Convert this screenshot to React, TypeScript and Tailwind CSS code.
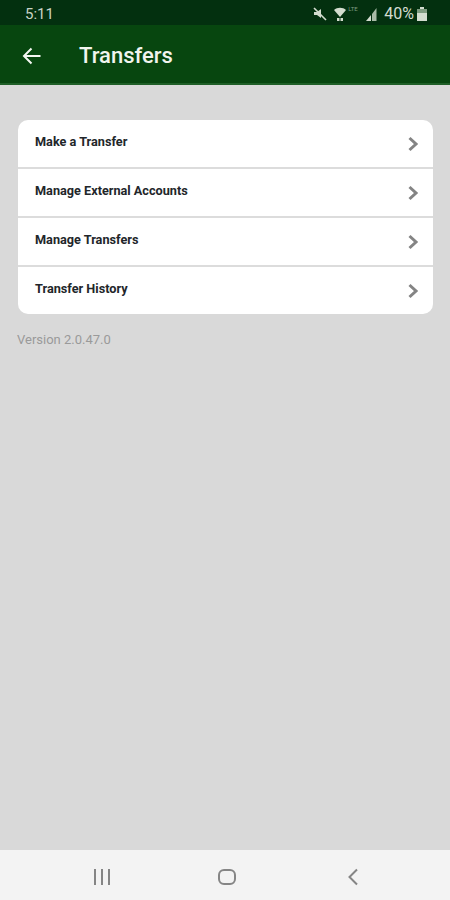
const rows = ["Make a Transfer", "Manage External Accounts", "Manage Transfers", "Transfer History"];

function Chevron() {
  return (
    <svg width="12" height="16" viewBox="0 0 12 16" fill="none" className="shrink-0">
      <path d="M2.5 2 L9 8 L2.5 14" stroke="#848484" strokeWidth="3" />
    </svg>
  );
}

function StatusIcons() {
  return (
    <div className="flex items-center text-[#d3dccf] pt-[3px]">
      {/* muted */}
      <svg width="14" height="14" viewBox="0 0 14 14" className="mr-[7px]">
        <path d="M1 5h3l4-3v9L4 8H1z" fill="#d3dccf" />
        <path d="M1 1l12 12" stroke="#d3dccf" strokeWidth="1.6" />
      </svg>
      {/* wifi */}
      <svg width="12" height="14" viewBox="0 0 12 14">
        <path d="M0 3c3-3 9-3 12 0L6 10z" fill="#d3dccf" />
        <path d="M3 11h2.500v3H3zM6.500 11H9v3H6.500z" fill="#d3dccf" />
      </svg>
      {/* lte */}
      <span className="w-[20px] pl-[2px] text-[6px] leading-none text-[#7f9b80] self-start font-['Roboto',sans-serif]">LTE</span>
      {/* signal */}
      <svg width="11" height="13" viewBox="0 0 11 13" className="mr-[7px]">
        <path d="M0 13 L5 7 V13z" fill="#d3dccf" />
        <path d="M6 6 L10.500 0 V13 H6z" fill="#a9bba8" />
      </svg>
      <span className="text-[16px] leading-none font-['Roboto',sans-serif]">40%</span>
      {/* battery */}
      <svg width="10" height="14" viewBox="0 0 10 14" className="ml-[3px]">
        <path d="M3 0h4v2H3z" fill="#d3dccf" />
        <path d="M0 2h10v4H0z" fill="#7f9b80" />
        <path d="M0 6h10v8H0z" fill="#d3dccf" />
      </svg>
    </div>
  );
}

export default function App() {
  return (
    <div className="flex flex-col w-[450px] h-[900px] bg-[#d9d9d9] font-['Roboto',sans-serif] overflow-hidden">
      {/* Status bar */}
      <div className="flex items-center justify-between h-[25px] pl-[25px] pr-[23px] bg-[#03300f]">
        <span className="pt-[3px] text-[15px] leading-none text-[#c9d4c6]">5:11</span>
        <StatusIcons />
      </div>

      {/* Header */}
      <div className="flex items-center h-[60px] pl-[22px] pt-[4px] bg-[#07460f] border-b-2 border-[#1f5f27]">
        <svg width="19" height="18" viewBox="0 0 19 18" fill="none">
          <path d="M18.500 9H2 M9.500 1.500 L2 9 L9.500 16.500" stroke="#f4f7f2" strokeWidth="2" />
        </svg>
        <h1 className="ml-[38px] text-[22px] font-medium leading-none text-[#f1f4ee]">Transfers</h1>
      </div>

      {/* List */}
      <div className="flex-1 pl-[18px] pr-[17px] pt-[35px]">
        <div className="rounded-[10px] bg-white overflow-hidden">
          {rows.map((row, i) => (
            <div
              key={row}
              className={`flex items-center justify-between pl-[17px] pr-[14px] ${i < rows.length - 1 ? "h-[49px] border-b-2 border-[#dcdcdc]" : "h-[47px]"}`}
            >
              <span className="text-[12.7px] font-bold leading-none text-[#22262a] -mt-[3px]">{row}</span>
              <Chevron />
            </div>
          ))}
        </div>
        <p className="mt-[19px] -ml-[1px] text-[13px] leading-none text-[#9a9a9a]">Version 2.0.47.0</p>
      </div>

      {/* Nav bar */}
      <div className="flex items-center h-[50px] pl-[93px] pt-[3px] bg-[#f3f3f3]">
        <svg width="18" height="16" viewBox="0 0 18 16" fill="none">
          <path d="M2 0v16M9 0v16M16 0v16" stroke="#858585" strokeWidth="2" />
        </svg>
        <svg width="18" height="16" viewBox="0 0 18 16" fill="none" className="ml-[107px]">
          <rect x="1" y="1" width="16" height="14" rx="5" stroke="#858585" strokeWidth="2" />
        </svg>
        <svg width="12" height="18" viewBox="0 0 12 18" fill="none" className="ml-[111px]">
          <path d="M10 1.500 L2.500 9 L10 16.500" stroke="#858585" strokeWidth="2" />
        </svg>
      </div>
    </div>
  );
}
